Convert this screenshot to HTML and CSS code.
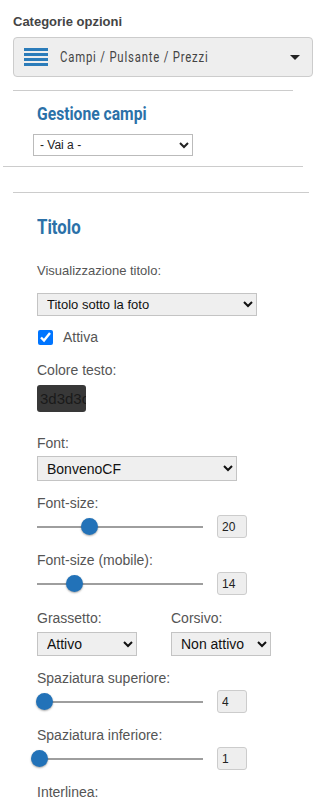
FILE: index.html
```html
<!DOCTYPE html>
<html lang="it">
<head>
    <meta charset="UTF-8">
    <meta name="viewport" content="width=device-width, initial-scale=1.0">
    <title>Categorie opzioni</title>
    <link rel="stylesheet" href="styles.css">
</head>
<body>
    <div class="pannello">
        <div class="categorie-titolo">Categorie opzioni</div>

        <!-- Selettore categoria -->
        <div class="categoria-box">
            <span class="icona-menu"><i></i><i></i><i></i><i></i></span>
            <span class="categoria-testo"><span>Campi / Pulsante / Prezzi</span></span>
            <span class="caret"></span>
        </div>

        <hr class="linea linea-1">

        <div class="gestione">
            <h2><span>Gestione campi</span></h2>
            <select class="vai-a">
                <option>- Vai a -</option>
            </select>
        </div>

        <hr class="linea linea-2">
        <hr class="linea linea-3">

        <!-- Opzioni titolo -->
        <div class="sezione">
            <h2 class="titolo-sezione"><span>Titolo</span></h2>

            <label class="etichetta etichetta-vis">Visualizzazione titolo:</label>
            <select class="select-grigio select-vis">
                <option>Titolo sotto la foto</option>
            </select>

            <label class="check-riga">
                <input type="checkbox" checked>
                <span>Attiva</span>
            </label>

            <label class="etichetta etichetta-colore">Colore testo:</label>
            <input type="text" class="colore" value="3d3d3c">

            <label class="etichetta etichetta-font">Font:</label>
            <select class="select-grigio select-font">
                <option>BonvenoCF</option>
            </select>

            <label class="etichetta etichetta-slider">Font-size:</label>
            <div class="slider-riga">
                <input type="range" min="0" max="63" value="20">
                <input type="text" class="numero" value="20">
            </div>

            <label class="etichetta etichetta-slider">Font-size (mobile):</label>
            <div class="slider-riga">
                <input type="range" min="0" max="63" value="14">
                <input type="text" class="numero" value="14">
            </div>

            <div class="colonne">
                <div>
                    <label class="etichetta etichetta-col">Grassetto:</label>
                    <select class="select-grigio select-piccolo">
                        <option>Attivo</option>
                    </select>
                </div>
                <div>
                    <label class="etichetta etichetta-col">Corsivo:</label>
                    <select class="select-grigio select-piccolo">
                        <option>Non attivo</option>
                    </select>
                </div>
            </div>

            <label class="etichetta etichetta-slider">Spaziatura superiore:</label>
            <div class="slider-riga">
                <input type="range" min="0" max="100" value="4">
                <input type="text" class="numero" value="4">
            </div>

            <label class="etichetta etichetta-slider">Spaziatura inferiore:</label>
            <div class="slider-riga">
                <input type="range" min="0" max="100" value="1">
                <input type="text" class="numero" value="1">
            </div>

            <label class="etichetta etichetta-slider">Interlinea:</label>
        </div>
    </div>
</body>
</html>
```

FILE: styles.css
```css
body {
    font-family: "Liberation Sans", Arial, sans-serif;
    margin: 0;
    background-color: #fff;
    color: #555;
}

.pannello {
    padding-top: 13px;
    overflow: hidden;
    height: 804px;
}

.categorie-titolo {
    margin-left: 13px;
    font-size: 13px;
    line-height: 17px;
    font-weight: bold;
    color: #444;
}

.categoria-box {
    display: flex;
    align-items: center;
    margin: 7px 0 0 13px;
    width: 298px;
    height: 38px;
    background: #eee;
    border: 1px solid #ccc;
    border-radius: 4px;
}

.icona-menu {
    display: flex;
    flex-direction: column;
    gap: 2px;
    width: 24px;
    margin-left: 10px;
}

.icona-menu i {
    display: block;
    height: 3px;
    background: #2b7cba;
}

.categoria-testo {
    margin-left: 12px;
    flex: 1;
    font-family: Roboto, sans-serif;
    font-size: 14px;
    letter-spacing: 1px;
    color: #444;
}

/* testo stretto: il font condensato non c'e' */
.categoria-testo span,
h2 span {
    display: inline-block;
    white-space: nowrap;
    transform-origin: left center;
}

.categoria-testo span {
    transform: scaleX(0.81);
}

.caret {
    width: 0;
    height: 0;
    border-left: 5px solid transparent;
    border-right: 5px solid transparent;
    border-top: 5px solid #222;
    margin-right: 12px;
}

.linea {
    border: none;
    border-top: 1px solid #ccc;
    margin: 0;
}

.linea-1 {
    margin: 13px 0 0 13px;
    width: 280px;
}

.linea-2 {
    margin: 10px 0 0 3px;
    width: 300px;
}

.linea-3 {
    margin: 25px 0 0 13px;
    width: 296px;
}

h2 {
    font-family: Roboto, sans-serif;
    font-weight: bold;
    color: #2b71a8;
    margin: 0;
}

.gestione {
    padding-left: 33px;
}

.gestione h2 {
    font-size: 18px;
    line-height: 22px;
    margin: 12px 0 0 4px;
}

.gestione h2 span {
    transform: scaleX(0.87);
}

.vai-a {
    margin-top: 9px;
    width: 160px;
    height: 22px;
    font-family: "Liberation Sans", Arial, sans-serif;
    font-size: 12px;
    color: #222;
    background: #fff;
    border: 1px solid #bbb;
    border-radius: 0;
    padding: 0 2px;
}

.sezione {
    padding-left: 37px;
}

.titolo-sezione {
    font-size: 21px;
    line-height: 26px;
    margin-top: 21px;
}

.titolo-sezione span {
    transform: scaleX(0.8);
}

.etichetta {
    display: block;
    font-size: 14px;
    line-height: 16px;
    color: #555;
}

.etichetta-vis {
    margin-top: 23px;
    font-size: 13px;
}

.select-grigio {
    display: block;
    font-family: "Liberation Sans", Arial, sans-serif;
    color: #111;
    background: #efefef;
    border: 1px solid #c4c4c4;
    border-radius: 0;
}

.select-vis {
    margin-top: 14px;
    width: 220px;
    height: 23px;
    font-size: 13px;
    padding: 0 5px;
}

.check-riga {
    display: flex;
    align-items: center;
    margin-top: 13px;
    font-size: 14px;
    line-height: 16px;
    color: #555;
}

.check-riga input {
    width: 15px;
    height: 15px;
    margin: 0 10px 0 1px;
}

.etichetta-colore {
    margin-top: 17px;
}

.colore {
    display: block;
    margin-top: 7px;
    width: 49px;
    height: 27px;
    box-sizing: border-box;
    padding: 0 0 0 3px;
    border: none;
    border-radius: 3px;
    background: #383838;
    color: #1a1a1a;
    font-family: "Liberation Sans", Arial, sans-serif;
    font-size: 15px;
}

.etichetta-font {
    margin-top: 23px;
}

.select-font {
    margin-top: 5px;
    width: 200px;
    height: 25px;
    font-size: 14px;
    padding: 0 5px;
}

.etichetta-slider {
    margin-top: 14px;
}

.slider-riga {
    display: flex;
    align-items: center;
    margin-top: 4px;
    margin-left: -8px;
    height: 23px;
}

.slider-riga input[type=range] {
    -webkit-appearance: none;
    appearance: none;
    width: 182px;
    height: 18px;
    margin: 0;
    background: linear-gradient(#9e9e9e, #9e9e9e) center / calc(100% - 16px) 2px no-repeat;
}

.slider-riga input[type=range]::-webkit-slider-thumb {
    -webkit-appearance: none;
    width: 17px;
    height: 17px;
    border-radius: 50%;
    background: #2272b8;
    box-shadow: 0 1px 2px rgba(0,0,0,0.35);
}

.numero {
    margin-left: 6px;
    width: 30px;
    height: 23px;
    box-sizing: border-box;
    padding: 0 4px;
    border: 1px solid #ccc;
    border-radius: 3px;
    background: #eee;
    color: #222;
    font-family: "Liberation Sans", Arial, sans-serif;
    font-size: 12px;
}

.colonne {
    display: flex;
    gap: 34px;
    margin-top: 15px;
}

.etichetta-col {
    margin-bottom: 6px;
}

.select-piccolo {
    width: 100px;
    height: 24px;
    font-size: 14px;
    padding: 0 5px;
}
```
